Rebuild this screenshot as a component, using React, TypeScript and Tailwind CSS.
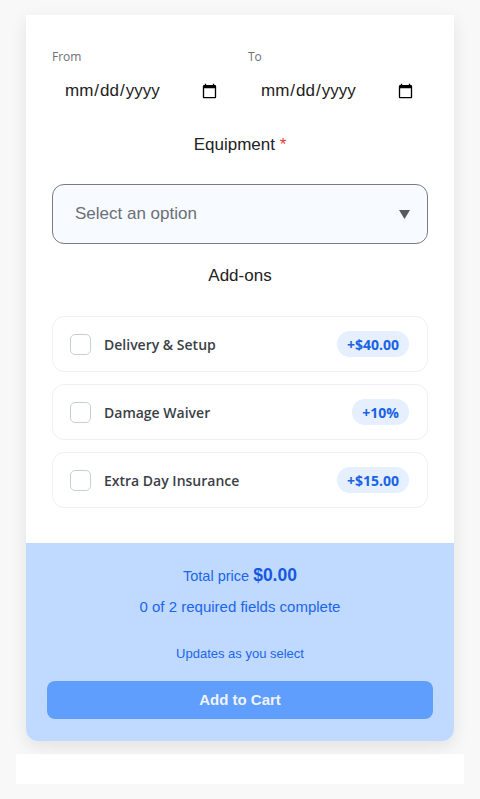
import { useState } from "react";

const addons = [
  { id: "delivery", label: "Delivery & Setup", price: "+$40.00" },
  { id: "waiver", label: "Damage Waiver", price: "+10%" },
  { id: "insurance", label: "Extra Day Insurance", price: "+$15.00" },
];

function AddonRow({ label, price }: { label: string; price: string }) {
  const [checked, setChecked] = useState(false);
  return (
    <label className="flex h-[56px] items-center rounded-xl border border-[#edf1f7] bg-white pl-[17px] pr-[18px] cursor-pointer">
      <input
        type="checkbox"
        checked={checked}
        onChange={() => setChecked(!checked)}
        className="h-[21px] w-[21px] appearance-none rounded-[5px] border-[1.5px] border-[#c9ced6] bg-white"
      />
      <span className="ml-[13px] text-[14px] font-semibold text-[#3a3f47] [font-family:'Open_Sans',sans-serif]">
        {label}
      </span>
      <span className="ml-auto flex h-[26px] items-center rounded-full bg-[#e6effd] px-[10px] text-[14px] font-bold text-[#1a62e6] [font-family:'Open_Sans',sans-serif]">
        {price}
      </span>
    </label>
  );
}

export default function App() {
  return (
    <div className="min-h-screen bg-[#f8f8f8] pt-[15px] [font-family:'Liberation_Sans',Arial,sans-serif]">
      <div className="mx-[26px] overflow-hidden rounded-b-xl bg-white shadow-[0_6px_18px_rgba(0,0,0,0.09)]">
        <div className="px-[26px] pt-[34px] pb-[35px]">
          <div className="grid grid-cols-2 gap-4">
            {["From", "To"].map((l) => (
              <div key={l} className="flex flex-col">
                <span className="text-[12px] leading-4 font-medium text-[#6b6f76] [font-family:'Open_Sans',sans-serif]">
                  {l}
                </span>
                <input
                  type="date"
                  className="mt-1.5 h-10 w-full bg-white px-3 text-[17px] text-[#222] outline-none [font-family:'Liberation_Sans',Arial,sans-serif]"
                />
              </div>
            ))}
          </div>

          <div className="mt-[22px] text-center text-[17px] leading-6 text-[#222]">
            Equipment <span className="text-[#e53935]">*</span>
          </div>

          <div className="relative mt-[27px]">
            <select
              defaultValue=""
              className="h-[60px] w-full appearance-none rounded-xl border border-[#7b7b7b] bg-[#f7faff] pl-[22px] pr-10 text-[17px] text-[#6b6f76] outline-none"
            >
              <option value="" disabled>
                Select an option
              </option>
              <option>Excavator</option>
              <option>Scissor Lift</option>
            </select>
            <svg
              className="pointer-events-none absolute right-[18px] top-[26px]"
              width="11"
              height="9"
              viewBox="0 0 11 9"
            >
              <path d="M0 0h11L5.5 9z" fill="#555a61" />
            </svg>
          </div>

          <div className="mt-[20px] text-center text-[17px] leading-6 text-[#222]">Add-ons</div>

          <div className="mt-[28px] flex flex-col gap-3">
            {addons.map((a) => (
              <AddonRow key={a.id} label={a.label} price={a.price} />
            ))}
          </div>
        </div>

        <div className="bg-[#c0d9fe] px-[21px] pt-5 pb-[22px] text-center text-[#1a66ec]">
          <div className="text-[14.5px] leading-6">
            Total price <span className="text-[17.5px] font-bold text-[#1559e0]">$0.00</span>
          </div>
          <div className="mt-2 text-[15px] leading-[22px]">0 of 2 required fields complete</div>
          <div className="mt-[27px] text-[13px] leading-[18px]">Updates as you select</div>
          <button
            disabled
            className="mt-[18px] h-[38px] w-full rounded-lg bg-[#5f9efc] text-[15px] font-bold text-[#eef4ff]"
          >
            Add to Cart
          </button>
        </div>
      </div>
      <div className="mx-4 mt-[13px] h-[30px] bg-white" />
    </div>
  );
}
